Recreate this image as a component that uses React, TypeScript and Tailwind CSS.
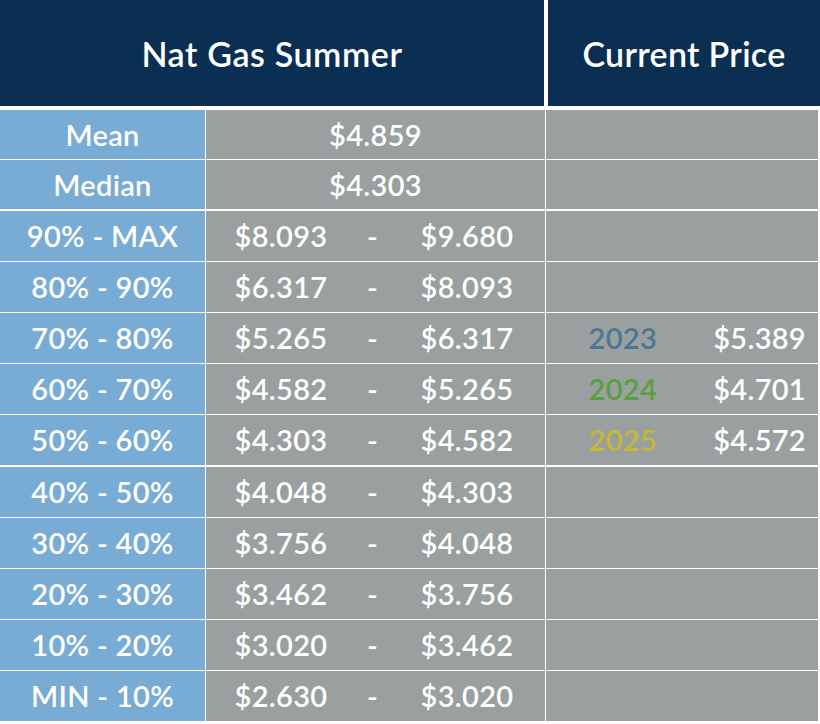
const ranges = [
  { label: "90% - MAX", low: "$8.093", high: "$9.680" },
  { label: "80% - 90%", low: "$6.317", high: "$8.093" },
  { label: "70% - 80%", low: "$5.265", high: "$6.317", year: "2023", price: "$5.389", color: "text-[#4a7795]" },
  { label: "60% - 70%", low: "$4.582", high: "$5.265", year: "2024", price: "$4.701", color: "text-[#5a9f3e]" },
  { label: "50% - 60%", low: "$4.303", high: "$4.582", year: "2025", price: "$4.572", color: "text-[#c6b737]" },
  { label: "40% - 50%", low: "$4.048", high: "$4.303" },
  { label: "30% - 40%", low: "$3.756", high: "$4.048" },
  { label: "20% - 30%", low: "$3.462", high: "$3.756" },
  { label: "10% - 20%", low: "$3.020", high: "$3.462" },
  { label: "MIN - 10%", low: "$2.630", high: "$3.020" },
];

const App = () => {
  return (
    <div
      className="w-[820px] h-[724px] bg-white text-white font-semibold overflow-hidden"
      style={{ fontFamily: "Lato, 'Noto Sans', sans-serif" }}
    >
      {/* header */}
      <div className="flex h-[106px] gap-[4px]">
        <div className="w-[544px] bg-[#0b2f53] flex items-center justify-center text-[34px] tracking-[0.6px]">
          Nat Gas Summer
        </div>
        <div className="flex-1 bg-[#0b2f53] flex items-center justify-center text-[34px] tracking-[0.3px]">
          Current Price
        </div>
      </div>

      <div className="mt-[4px] grid grid-cols-[205px_339px_272px] gap-x-px gap-y-px text-[29px] tracking-[0.3px]">
        {/* summary rows */}
        {[
          { label: "Mean", value: "$4.859" },
          { label: "Median", value: "$4.303" },
        ].map((r) => (
          <div key={r.label} className="contents">
            <div className="h-[49px] bg-[#79acd4] flex items-center justify-center">{r.label}</div>
            <div className="h-[49px] bg-[#99a09f] flex items-center justify-center">{r.value}</div>
            <div className="h-[49px] bg-[#99a09f]" />
          </div>
        ))}
      </div>

      <div className="mt-[2px] grid grid-cols-[205px_339px_272px] gap-x-px gap-y-px text-[29px] tracking-[0.3px]">
        {ranges.map((r, i) => (
          <div key={r.label} className="contents">
            <div className={`h-[50px] bg-[#79acd4] flex items-center justify-center ${i === 5 ? "mt-px" : ""}`}>
              {r.label}
            </div>
            <div
              className={`h-[50px] bg-[#99a09f] grid grid-cols-[150px_33px_1fr] items-center text-center ${i === 5 ? "mt-px" : ""}`}
            >
              <span>{r.low}</span>
              <span>-</span>
              <span>{r.high}</span>
            </div>
            <div className={`h-[50px] bg-[#99a09f] flex items-center ${i === 5 ? "mt-px" : ""}`}>
              {r.year && (
                <>
                  <span className={`w-[111px] text-right ${r.color}`}>{r.year}</span>
                  <span className="flex-1 text-right pr-[12px]">{r.price}</span>
                </>
              )}
            </div>
          </div>
        ))}
      </div>
    </div>
  );
};

export default App;
